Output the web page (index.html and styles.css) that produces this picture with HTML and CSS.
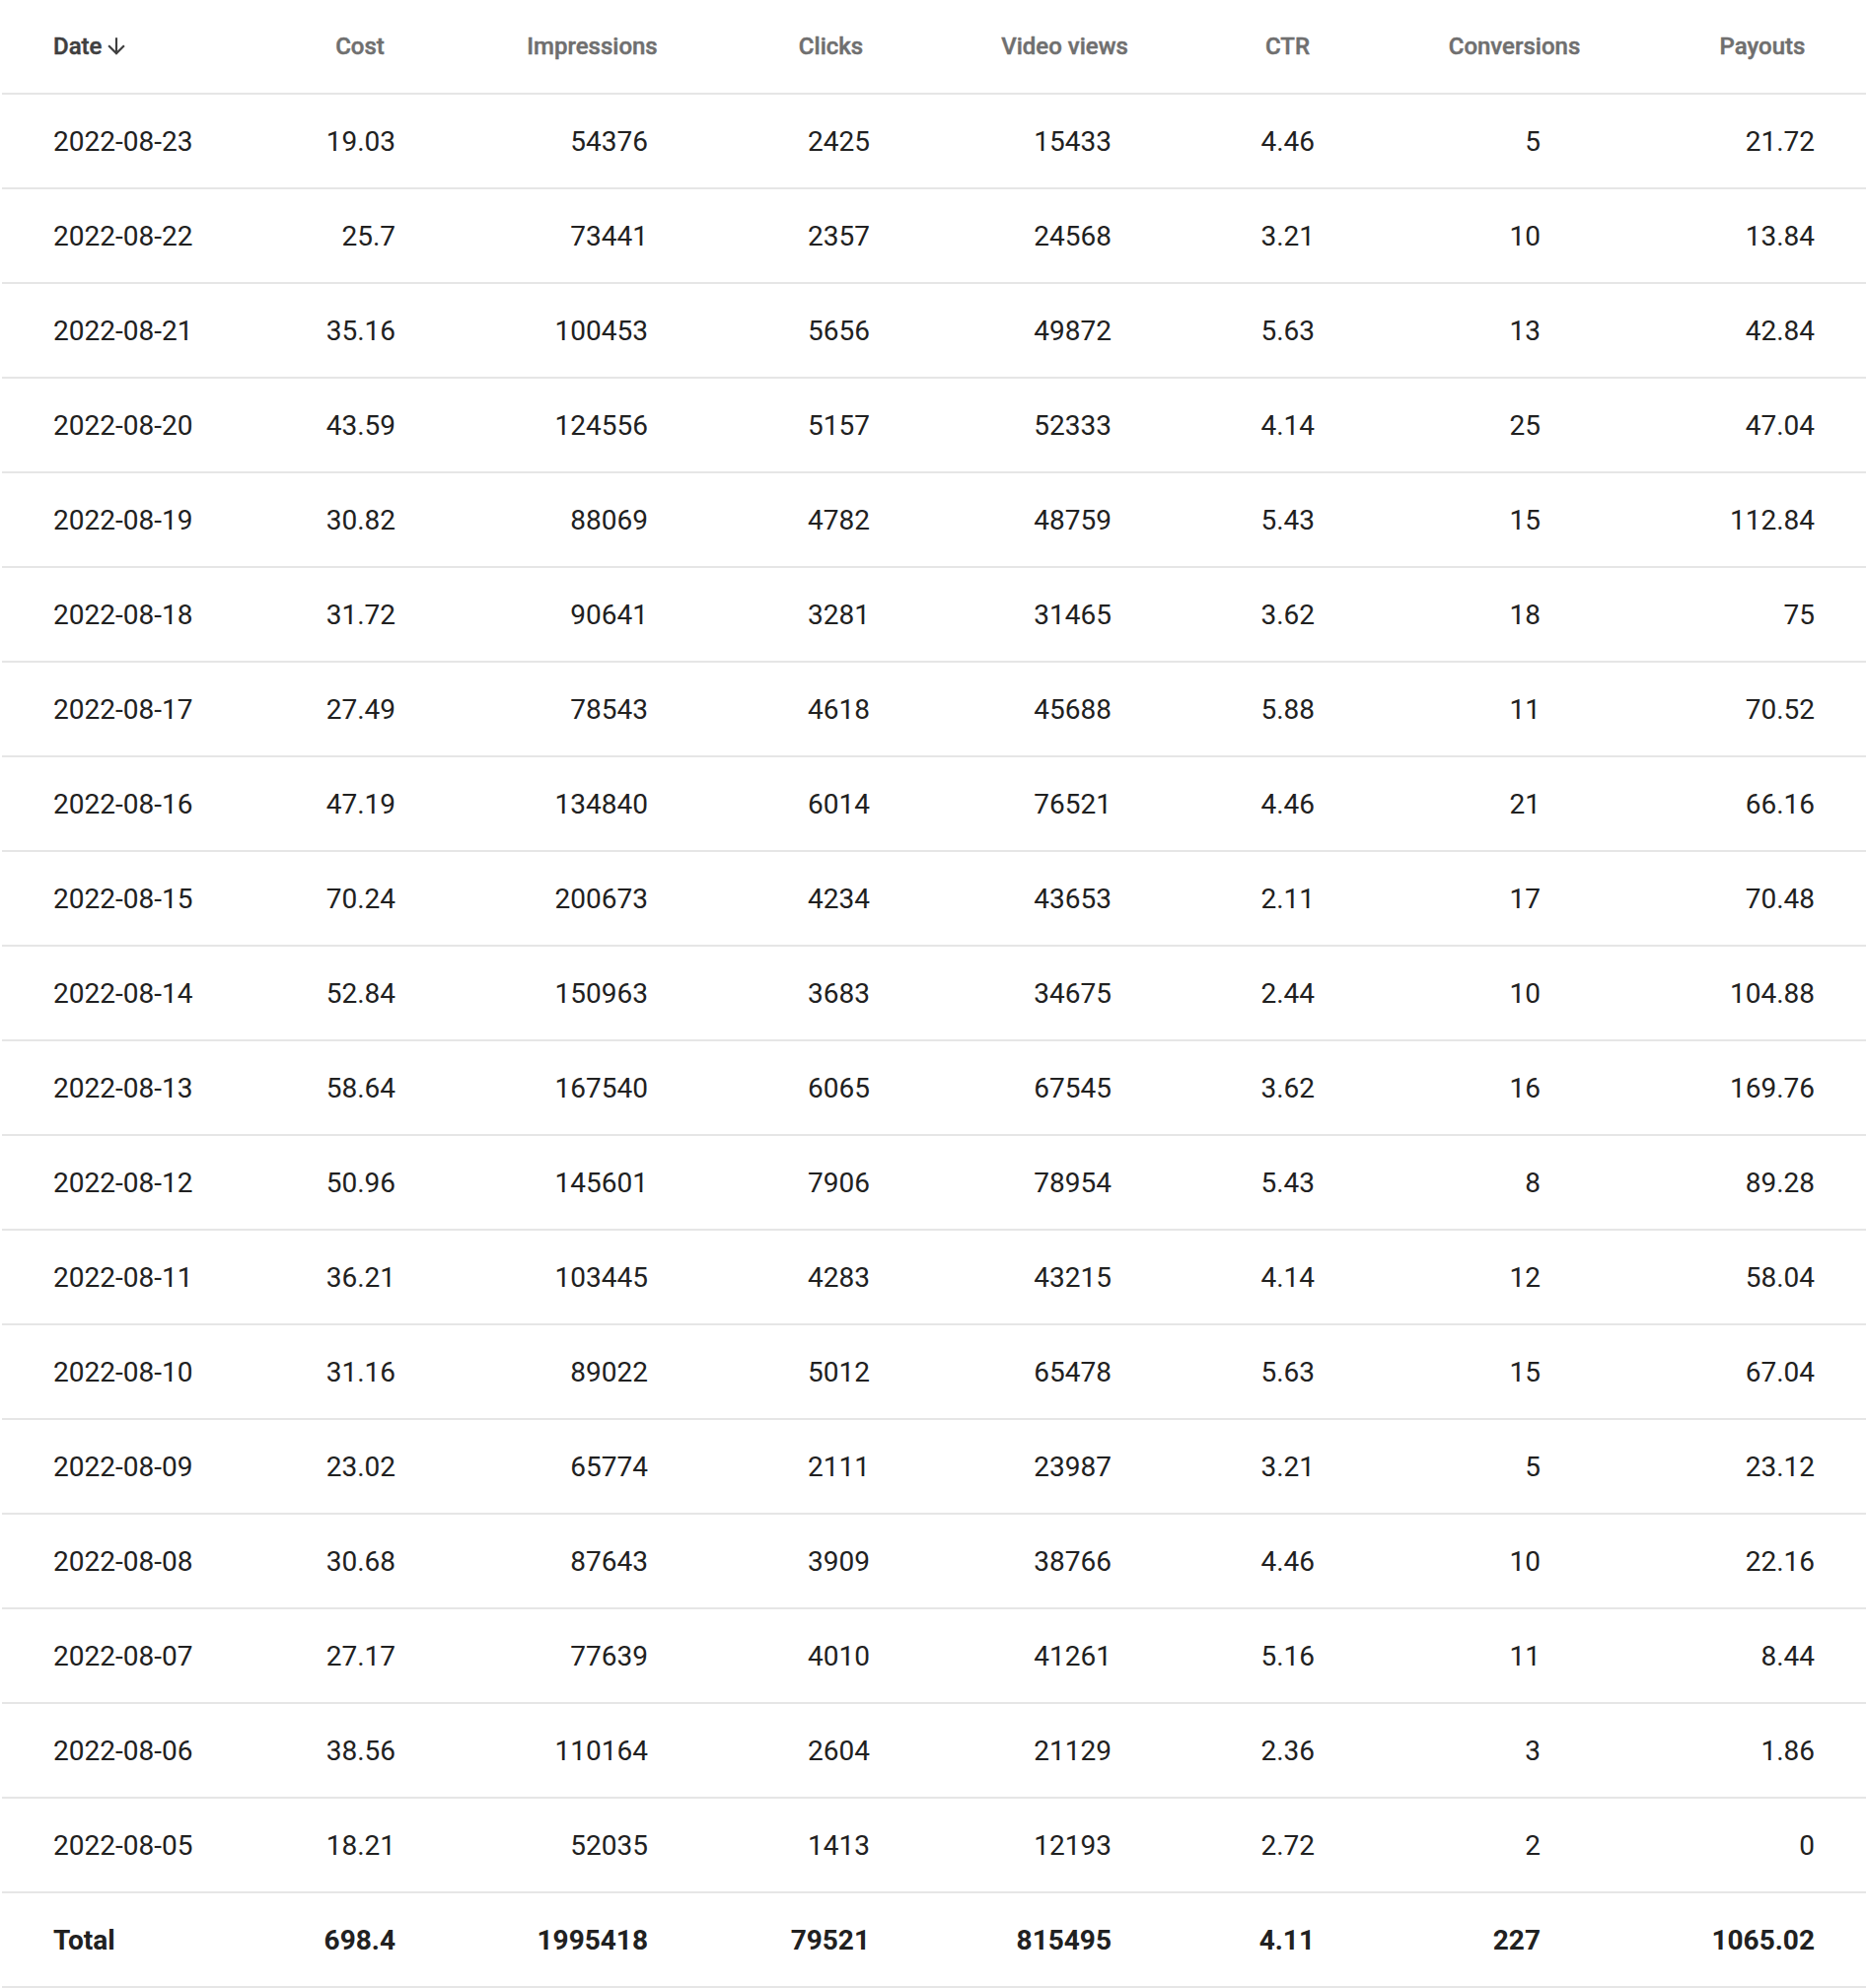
FILE: index.html
```html
<!DOCTYPE html>
<html lang="en">
<head>
<meta charset="utf-8">
<title>Report</title>
<link rel="stylesheet" href="styles.css">
</head>
<body>
<table class="report">
  <colgroup>
    <col class="w-date"><col class="w-cost"><col class="w-impr"><col class="w-clicks"><col class="w-video"><col class="w-ctr"><col class="w-conv"><col class="w-pay">
  </colgroup>
  <thead>
    <tr>
      <th class="h-date"><span class="sort">Date<svg class="arrow" viewBox="0 0 24 24" width="26" height="26"><path d="M20 12l-1.41-1.41L13 16.17V4h-2v12.17l-5.58-5.59L4 12l8 8 8-8z"/></svg></span></th>
      <th>Cost</th>
      <th>Impressions</th>
      <th>Clicks</th>
      <th>Video views</th>
      <th>CTR</th>
      <th>Conversions</th>
      <th>Payouts</th>
    </tr>
  </thead>
  <tbody>
    <tr><td>2022-08-23</td><td>19.03</td><td>54376</td><td>2425</td><td>15433</td><td>4.46</td><td>5</td><td>21.72</td></tr>
    <tr><td>2022-08-22</td><td>25.7</td><td>73441</td><td>2357</td><td>24568</td><td>3.21</td><td>10</td><td>13.84</td></tr>
    <tr><td>2022-08-21</td><td>35.16</td><td>100453</td><td>5656</td><td>49872</td><td>5.63</td><td>13</td><td>42.84</td></tr>
    <tr><td>2022-08-20</td><td>43.59</td><td>124556</td><td>5157</td><td>52333</td><td>4.14</td><td>25</td><td>47.04</td></tr>
    <tr><td>2022-08-19</td><td>30.82</td><td>88069</td><td>4782</td><td>48759</td><td>5.43</td><td>15</td><td>112.84</td></tr>
    <tr><td>2022-08-18</td><td>31.72</td><td>90641</td><td>3281</td><td>31465</td><td>3.62</td><td>18</td><td>75</td></tr>
    <tr><td>2022-08-17</td><td>27.49</td><td>78543</td><td>4618</td><td>45688</td><td>5.88</td><td>11</td><td>70.52</td></tr>
    <tr><td>2022-08-16</td><td>47.19</td><td>134840</td><td>6014</td><td>76521</td><td>4.46</td><td>21</td><td>66.16</td></tr>
    <tr><td>2022-08-15</td><td>70.24</td><td>200673</td><td>4234</td><td>43653</td><td>2.11</td><td>17</td><td>70.48</td></tr>
    <tr><td>2022-08-14</td><td>52.84</td><td>150963</td><td>3683</td><td>34675</td><td>2.44</td><td>10</td><td>104.88</td></tr>
    <tr><td>2022-08-13</td><td>58.64</td><td>167540</td><td>6065</td><td>67545</td><td>3.62</td><td>16</td><td>169.76</td></tr>
    <tr><td>2022-08-12</td><td>50.96</td><td>145601</td><td>7906</td><td>78954</td><td>5.43</td><td>8</td><td>89.28</td></tr>
    <tr><td>2022-08-11</td><td>36.21</td><td>103445</td><td>4283</td><td>43215</td><td>4.14</td><td>12</td><td>58.04</td></tr>
    <tr><td>2022-08-10</td><td>31.16</td><td>89022</td><td>5012</td><td>65478</td><td>5.63</td><td>15</td><td>67.04</td></tr>
    <tr><td>2022-08-09</td><td>23.02</td><td>65774</td><td>2111</td><td>23987</td><td>3.21</td><td>5</td><td>23.12</td></tr>
    <tr><td>2022-08-08</td><td>30.68</td><td>87643</td><td>3909</td><td>38766</td><td>4.46</td><td>10</td><td>22.16</td></tr>
    <tr><td>2022-08-07</td><td>27.17</td><td>77639</td><td>4010</td><td>41261</td><td>5.16</td><td>11</td><td>8.44</td></tr>
    <tr><td>2022-08-06</td><td>38.56</td><td>110164</td><td>2604</td><td>21129</td><td>2.36</td><td>3</td><td>1.86</td></tr>
    <tr><td>2022-08-05</td><td>18.21</td><td>52035</td><td>1413</td><td>12193</td><td>2.72</td><td>2</td><td>0</td></tr>
    <tr class="total"><td>Total</td><td>698.4</td><td>1995418</td><td>79521</td><td>815495</td><td>4.11</td><td>227</td><td>1065.02</td></tr>
  </tbody>
</table>
</body>
</html>
```
FILE: styles.css
```css
html, body {
  margin: 0;
  padding: 0;
  background: #ffffff;
}

body {
  font-family: Roboto, "Liberation Sans", Arial, sans-serif;
  color: #212121;
}

.report {
  margin-left: 2px;
  width: 1890px;
  table-layout: fixed;
  border-collapse: separate;
  border-spacing: 0;
}

.w-date { width: 275px; }
.w-cost { width: 176px; }
.w-impr { width: 295px; }
.w-clicks { width: 189px; }
.w-video { width: 285px; }
.w-ctr { width: 167px; }
.w-conv { width: 293px; }
.w-pay { width: 210px; }

.report th {
  font-size: 24px;
  font-weight: 500;
  -webkit-text-stroke: 0.45px currentColor;
  line-height: 30px;
  padding: 32px 0 32px;
  color: #6f6f6f;
  text-align: center;
  border-bottom: 2px solid #e6e6e6;
  white-space: nowrap;
}

.report th.h-date {
  text-align: left;
  padding-left: 52px;
  color: #3f3f3f;
}

.sort {
  display: inline-flex;
  align-items: center;
}

.arrow {
  fill: #3f3f3f;
  margin-left: 2px;
}

.report td {
  font-size: 28px;
  font-weight: 400;
  line-height: 32px;
  padding: 32px 0 30px;
  text-align: right;
  border-bottom: 2px solid #e6e6e6;
  white-space: nowrap;
}

.report td:nth-child(1) { text-align: left; padding-left: 52px; }
.report td:nth-child(2) { padding-right: 52px; }
.report td:nth-child(3) { padding-right: 91px; }
.report td:nth-child(4) { padding-right: 55px; }
.report td:nth-child(5) { padding-right: 95px; }
.report td:nth-child(6) { padding-right: 56px; }
.report td:nth-child(7) { padding-right: 120px; }
.report td:nth-child(8) { padding-right: 52px; }

.report .total td {
  font-weight: 700;
}
```
